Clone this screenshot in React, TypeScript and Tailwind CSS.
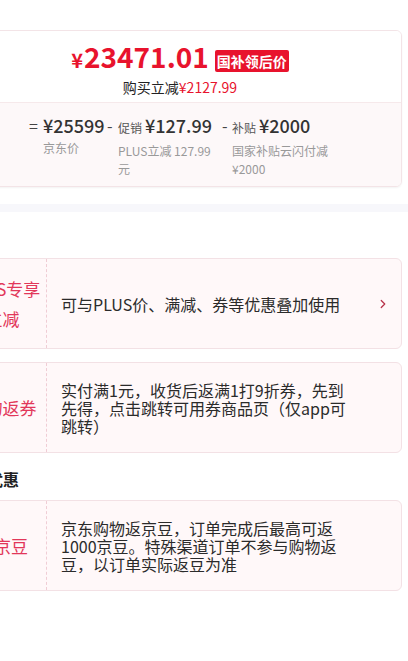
import { ChevronRight } from "lucide-react";

const font = {
  fontFamily: '"Noto Sans CJK SC", "Noto Sans", sans-serif',
};

type Part = {
  op: string;
  opWidth: string;
  label?: string;
  value: string;
  caption: string;
  captionWidth: string;
};

const parts: Part[] = [
  { op: "=", opWidth: "w-[14px]", value: "¥25599", caption: "京东价", captionWidth: "w-[63px]" },
  { op: "-", opWidth: "w-[11px]", label: "促销", value: "¥127.99", caption: "PLUS立减 127.99元", captionWidth: "w-[96px]" },
  { op: "-", opWidth: "w-[10px]", label: "补贴", value: "¥2000", caption: "国家补贴云闪付减 ¥2000", captionWidth: "w-[104px]" },
];

const blockWidths = ["w-[64px]", "w-[104px]", "w-[110px]"];

function PromoCard({
  label,
  desc,
  arrow,
}: {
  label: React.ReactNode;
  desc: string;
  arrow?: boolean;
}) {
  return (
    <div className="flex h-[91px] rounded-[6px] border border-[#f3e1e5] bg-[#fff8f9]">
      <div className="flex w-[88px] shrink-0 items-center justify-center border-r border-dashed border-[#f0cdd5] text-center text-[17px] leading-[30px] text-[#e2375a]">
        {label}
      </div>
      <div className="flex flex-1 items-center pl-[14px]">
        <p className="w-[288px] text-[16px] leading-[18px] text-[#2b2b2b]">{desc}</p>
      </div>
      <div className="flex w-[54px] shrink-0 items-center pl-[27px]">
        {arrow && <ChevronRight size={14} strokeWidth={2.2} className="text-[#b8344b]" />}
      </div>
    </div>
  );
}

export default function App() {
  return (
    <div className="h-[661px] w-[408px] overflow-hidden bg-white" style={font}>
      <div className="pt-[30px]">
        <div className="ml-[-42px] w-[444px] overflow-hidden rounded-[6px] border border-[#f3e4e7] shadow-[0_1px_2px_rgba(0,0,0,0.05)]">
          <div className="flex h-[71px] flex-col items-center bg-white pt-[11px]">
            <div className="flex items-end">
              <div className="flex items-baseline font-bold text-[#e8132d]">
                <span className="mr-[1px] text-[20px] leading-none">¥</span>
                <span className="text-[28px] leading-none">23471.01</span>
              </div>
              <span className="mb-[-2px] ml-[6px] rounded-[2px] bg-[#e8132d] px-[2px] text-[14px] font-bold leading-[22px] text-white">
                国补领后价
              </span>
            </div>
            <div className="mt-[7px] text-[14px] leading-[20px] text-[#222]">
              购买立减<span className="text-[#e8132d]">¥2127.99</span>
            </div>
          </div>
          <div className="flex h-[84px] border-t border-[#f6e9eb] bg-[#fdf8f9] pl-[70px] pt-[10px]">
            {parts.map((p, i) => (
              <div key={i} className="flex items-start">
                <span className={`${p.opWidth} text-[16px] leading-[24px] text-[#444]`}>{p.op}</span>
                <div className={blockWidths[i]}>
                  <div className="flex items-baseline leading-[24px] text-[#333]">
                    {p.label && <span className="mr-[3px] text-[12px] text-[#555]">{p.label}</span>}
                    <span className="text-[18px] font-medium">{p.value}</span>
                  </div>
                  <p className={`${p.captionWidth} mt-[2px] text-[12px] leading-[18px] text-[#999]`}>
                    {p.caption}
                  </p>
                </div>
              </div>
            ))}
          </div>
        </div>
      </div>

      <div className="mt-[17px] h-[8px] bg-[#f7f7fb]" />

      <section className="ml-[-42px] w-[444px] pt-[14px]">
        <h3 className="h-[22px] text-[16px] font-bold leading-[22px] text-[#222]">促销</h3>
        <div className="mt-[10px] flex flex-col gap-[13px]">
          <PromoCard
            label={
              <span>
                PLUS专享
                <br />
                立减
              </span>
            }
            desc="可与PLUS价、满减、券等优惠叠加使用"
            arrow
          />
          <PromoCard label="购物返券" desc="实付满1元，收货后返满1打9折券，先到先得，点击跳转可用券商品页（仅app可跳转）" />
        </div>
        <h3 className="ml-[-3px] mt-[15px] h-[22px] text-[16px] font-bold leading-[22px] text-[#222]">其他优惠</h3>
        <div className="mt-[10px]">
          <PromoCard label="返京豆" desc="京东购物返京豆，订单完成后最高可返1000京豆。特殊渠道订单不参与购物返豆，以订单实际返豆为准" />
        </div>
      </section>
    </div>
  );
}
